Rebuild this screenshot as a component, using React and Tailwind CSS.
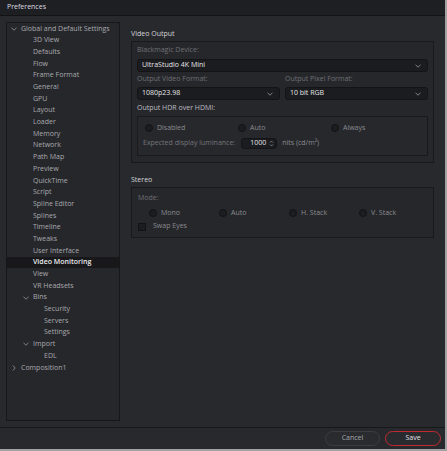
import React from "react";

const font = { fontFamily: '"Open Sans", "Noto Sans", sans-serif' };

const tree = [
  { label: "Global and Default Settings", level: 0, open: true },
  { label: "3D View", level: 1 },
  { label: "Defaults", level: 1 },
  { label: "Flow", level: 1 },
  { label: "Frame Format", level: 1 },
  { label: "General", level: 1 },
  { label: "GPU", level: 1 },
  { label: "Layout", level: 1 },
  { label: "Loader", level: 1 },
  { label: "Memory", level: 1 },
  { label: "Network", level: 1 },
  { label: "Path Map", level: 1 },
  { label: "Preview", level: 1 },
  { label: "QuickTime", level: 1 },
  { label: "Script", level: 1 },
  { label: "Spline Editor", level: 1 },
  { label: "Splines", level: 1 },
  { label: "Timeline", level: 1 },
  { label: "Tweaks", level: 1 },
  { label: "User Interface", level: 1 },
  { label: "Video Monitoring", level: 1, selected: true },
  { label: "View", level: 1 },
  { label: "VR Headsets", level: 1 },
  { label: "Bins", level: 1, open: true },
  { label: "Security", level: 2 },
  { label: "Servers", level: 2 },
  { label: "Settings", level: 2 },
  { label: "Import", level: 1, open: true },
  { label: "EDL", level: 2 },
  { label: "Composition1", level: 0, open: false },
];

function Chevron({ open }) {
  return open ? (
    <svg width="6" height="4" viewBox="0 0 6 4" className="shrink-0">
      <path d="M0.5 0.8 L3 3.2 L5.5 0.8" fill="none" stroke="#8a8b90" strokeWidth="0.9" />
    </svg>
  ) : (
    <svg width="4" height="6" viewBox="0 0 4 6" className="shrink-0">
      <path d="M0.8 0.5 L3.2 3 L0.8 5.5" fill="none" stroke="#8a8b90" strokeWidth="0.9" />
    </svg>
  );
}

function TreeRow({ item }) {
  const hasChevron = item.open !== undefined;
  const chevronLeft = item.level === 0 ? "pl-[4px]" : "pl-[16px]";
  const textLeft = { 0: "pl-[14px]", 1: "pl-[26px]", 2: "pl-[37px]" }[item.level];
  return (
    <div
      className={`h-[11.69px] flex items-center ${
        item.selected ? "bg-[#18181b] text-[#ececef] font-semibold" : "text-[#a8a9ae]"
      }`}
    >
      {hasChevron ? (
        <div className={`flex items-center ${chevronLeft}`}>
          <div className="w-[6px] flex justify-center">
            <Chevron open={item.open} />
          </div>
          <span className="pl-[4px] whitespace-nowrap">{item.label}</span>
        </div>
      ) : (
        <span className={`${textLeft} whitespace-nowrap`}>{item.label}</span>
      )}
    </div>
  );
}

function Select({ value }) {
  return (
    <div className="h-[13px] rounded-[3px] bg-[#1b1c1f] border border-[#141417] flex items-center justify-between pl-[4px] pr-[6px] text-[#e6e6e9]">
      <span>{value}</span>
      <svg width="6" height="4" viewBox="0 0 6 4">
        <path d="M0.5 0.8 L3 3.2 L5.5 0.8" fill="none" stroke="#9a9ba0" strokeWidth="0.8" />
      </svg>
    </div>
  );
}

function Radio({ label }) {
  return (
    <div className="flex items-center">
      <div className="w-[8px] h-[8px] rounded-full bg-[#1c1d20] border border-[#131316]" />
      <span className="pl-[4px] text-[#8a8b90]">{label}</span>
    </div>
  );
}

export default function App() {
  return (
    <div className="w-[447px] h-[451px] bg-[#a2a2a4] text-[7px]" style={font}>
      <div className="w-[445px] h-[449px] bg-[#28292d] flex flex-col">
        <div className="h-[16px] bg-[#1e1f23] border-b border-[#131316] flex items-center pl-[7px] text-[#dcdce0]">
          Preferences
        </div>

        <div className="flex pl-[6px] pt-[6px] h-[411px]">
          <div className="w-[114px] h-[399px] bg-[#26272b] border border-[#17171a]">
            {tree.map((item) => (
              <TreeRow key={item.label} item={item} />
            ))}
          </div>

          <div className="ml-[11px] w-[303px]">
            <div className="h-[19px] pt-[6px] leading-[11px] text-[#d6d6da]">Video Output</div>
            <div className="h-[122px] border border-[#19191c] bg-[#26272b] px-[5px]">
              <div className="h-[17px] flex items-center text-[#6f7075]">Blackmagic Device:</div>
              <Select value="UltraStudio 4K Mini" />
              <div className="grid grid-cols-2 gap-x-[5px]">
                <div className="h-[15px] flex items-center text-[#6f7075]">Output Video Format:</div>
                <div className="h-[15px] flex items-center text-[#6f7075]">Output Pixel Format:</div>
                <Select value="1080p23.98" />
                <Select value="10 bit RGB" />
              </div>
              <div className="h-[16px] flex items-center text-[#bdbdc2]">Output HDR over HDMI:</div>
              <div className="h-[40px] border border-[#1a1a1d] bg-[#27282c]">
                <div className="h-[21px] pt-[1px] pl-[7px] grid grid-cols-[93px_93px_93px] items-center">
                  <Radio label="Disabled" />
                  <Radio label="Auto" />
                  <Radio label="Always" />
                </div>
                <div className="flex items-center pl-[5px] h-[10px]">
                  <span className="text-[#74757a]">Expected display luminance:</span>
                  <div className="ml-[6px] w-[36px] h-[11px] rounded-[3px] bg-[#1b1c1f] border border-[#141417] flex items-center justify-end pr-[2px] text-[#e6e6e9]">
                    <span>1000</span>
                    <svg width="5" height="7" viewBox="0 0 5 7" className="ml-[3px]">
                      <path d="M1 2.6 L2.5 1.1 L4 2.6 M1 4.4 L2.5 5.9 L4 4.4" fill="none" stroke="#a0a1a6" strokeWidth="0.7" />
                    </svg>
                  </div>
                  <span className="pl-[5px] text-[#8a8b90]">nits (cd/m²)</span>
                </div>
              </div>
            </div>

            <div className="h-[24px] flex items-end pb-[2.5px] leading-[11px] text-[#d6d6da]">Stereo</div>
            <div className="h-[51px] border border-[#19191c] bg-[#26272b] px-[6px]">
              <div className="h-[20px] flex items-center text-[#6f7075]">Mode:</div>
              <div className="h-[9px] pl-[11px] grid grid-cols-[70px_70px_70px_70px] items-center">
                <Radio label="Mono" />
                <Radio label="Auto" />
                <Radio label="H. Stack" />
                <Radio label="V. Stack" />
              </div>
              <div className="h-[19px] flex items-center">
                <div className="w-[8px] h-[8px] bg-[#1c1d20] border border-[#131316]" />
                <span className="pl-[7px] text-[#8a8b90]">Swap Eyes</span>
              </div>
            </div>
          </div>
        </div>

        <div className="flex-1 border-t border-[#18181b] flex items-center justify-end pr-[4px] gap-[5px]">
          <div className="w-[55px] h-[15px] rounded-full border border-[#3c3d42] bg-[#2a2b2f] flex items-center justify-center text-[#a6a7ac]">
            Cancel
          </div>
          <div className="w-[56px] h-[15px] rounded-full border border-[#c02a30] bg-[#2a2b2f] flex items-center justify-center text-[#e0e0e4]">
            Save
          </div>
        </div>
      </div>
    </div>
  );
}
